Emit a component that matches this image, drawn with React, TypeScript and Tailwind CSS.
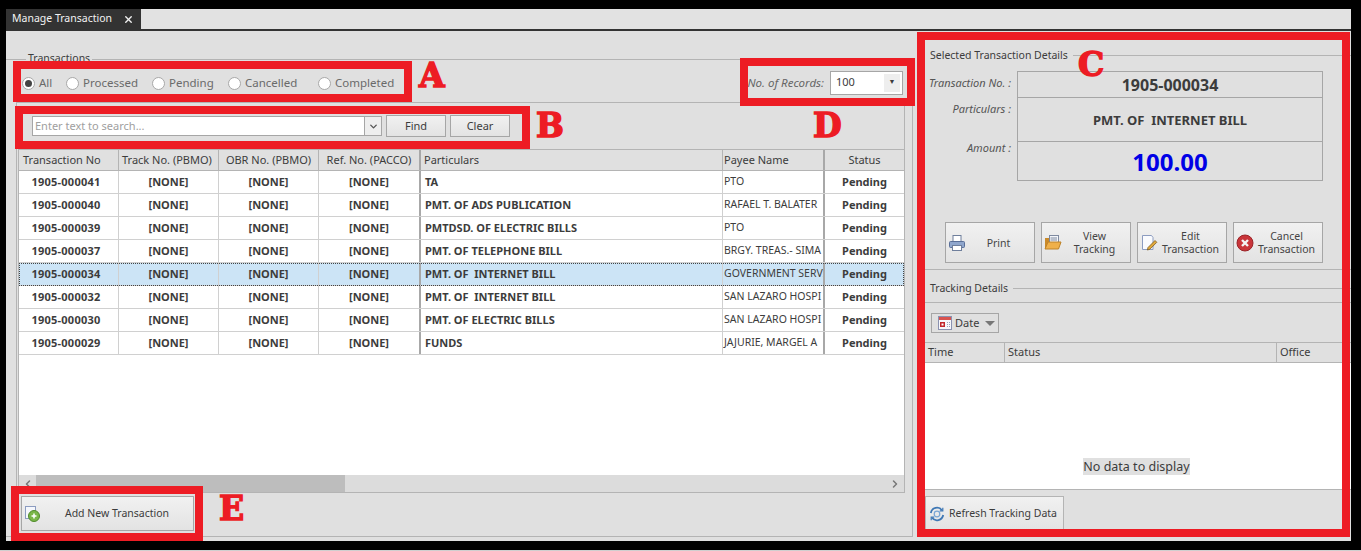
import type { ReactNode } from "react";
import { ChevronLeft, ChevronRight, ChevronDown, X } from "lucide-react";

// Manage Transaction window with the red callout boxes laid on top.
const FONT = "font-['Noto_Sans','Open_Sans',sans-serif]";

const rows = [
  { no: "1905-000041", part: "TA", payee: "PTO" },
  { no: "1905-000040", part: "PMT. OF ADS PUBLICATION", payee: "RAFAEL T. BALATER" },
  { no: "1905-000039", part: "PMTDSD. OF ELECTRIC BILLS", payee: "PTO" },
  { no: "1905-000037", part: "PMT. OF TELEPHONE BILL", payee: "BRGY. TREAS.- SIMA" },
  { no: "1905-000034", part: "PMT. OF  INTERNET BILL", payee: "GOVERNMENT SERVI", selected: true },
  { no: "1905-000032", part: "PMT. OF  INTERNET BILL", payee: "SAN LAZARO HOSPI" },
  { no: "1905-000030", part: "PMT. OF ELECTRIC BILLS", payee: "SAN LAZARO HOSPI" },
  { no: "1905-000029", part: "FUNDS", payee: "JAJURIE, MARGEL A" },
];

const radios = [
  { label: "All", w: "w-[44px]", on: true },
  { label: "Processed", w: "w-[86px]" },
  { label: "Pending", w: "w-[76px]" },
  { label: "Cancelled", w: "w-[90px]" },
  { label: "Completed", w: "w-[84px]" },
];

const Radio = ({ label, w, on }: { label: string; w: string; on?: boolean }) => (
  <div className={`${w} flex items-center gap-[4px] shrink-0`}>
    <span className="w-[13px] h-[13px] rounded-full border border-[#a8a8a8] bg-white flex items-center justify-center">
      {on && <span className="w-[7px] h-[7px] rounded-full bg-[#444]" />}
    </span>
    <span className="text-[11.5px] text-[#6a6a6a]">{label}</span>
  </div>
);

const Callout = ({ className }: { className: string }) => (
  <div className={`absolute border-[8px] border-[#ed1c24] pointer-events-none ${className}`} />
);

const Letter = ({ className, children }: { className: string; children: ReactNode }) => (
  <div className={`absolute font-['DejaVu_Serif',serif] font-bold text-[33px] leading-none text-[#ed1c24] [-webkit-text-stroke:1.5px_#ed1c24] ${className}`}>
    {children}
  </div>
);

const ActionButton = ({ icon, children }: { icon: ReactNode; children: ReactNode }) => (
  <div className="w-[90px] h-[41px] shrink-0 border border-[#a6a6a6] bg-gradient-to-b from-[#f1f1f1] to-[#e3e3e3] flex items-center pl-[2px] pr-[3px]">
    <span className="w-[18px] h-[18px] shrink-0">{icon}</span>
    <span className="flex-1 text-center text-[10.5px] leading-[13px] text-[#444] pt-[1px]">{children}</span>
  </div>
);

const PrinterIcon = () => (
  <svg viewBox="0 0 18 18" className="w-full h-full">
    <rect x="5" y="1.500" width="8" height="6" fill="#fff" stroke="#6f7f9c" />
    <rect x="1.500" y="7.500" width="15" height="6" rx="1" fill="#8fa6cc" stroke="#5a6f98" />
    <rect x="4.500" y="11.500" width="9" height="5" fill="#fff" stroke="#6f7f9c" />
  </svg>
);

const FolderIcon = () => (
  <svg viewBox="0 0 18 18" className="w-full h-full">
    <path d="M1 4h4l1-1v12H1z" fill="#c98a2b" />
    <rect x="5.500" y="1.500" width="9" height="9" fill="#f4f6fa" stroke="#7f8aa0" />
    <path d="M6.500 4h6.500M6.500 6h6.500" stroke="#7f8aa0" />
    <path d="M4 8h13l-2.500 7H1z" fill="#efb04a" stroke="#bd8228" />
  </svg>
);

const EditIcon = () => (
  <svg viewBox="0 0 18 18" className="w-full h-full">
    <path d="M2.500 1.500h9l1.500 2v12h-10.500z" fill="#fafbfe" stroke="#8c9cc0" />
    <path d="M8 13.500l7-7 1.800 1.800-7 7-2.500.7z" fill="#e2a93b" stroke="#7a5a20" strokeWidth="0.800" />
  </svg>
);

const CancelIcon = () => (
  <svg viewBox="0 0 18 18" className="w-full h-full">
    <circle cx="9" cy="9" r="8" fill="#c9353a" stroke="#9a2327" />
    <path d="M6 6l6 6M12 6l-6 6" stroke="#f4f4f4" strokeWidth="2.400" />
  </svg>
);

const CalendarIcon = () => (
  <svg viewBox="0 0 14 14" className="w-[14px] h-[14px] shrink-0">
    <rect x="0.500" y="0.500" width="13" height="13" fill="#f7f7fb" stroke="#8a92b0" />
    <rect x="1" y="1" width="12" height="3" fill="#d9534f" />
    <rect x="2" y="6" width="5" height="5" fill="#c1272d" />
    <rect x="3.500" y="7.500" width="2" height="2" fill="#fff" />
    <path d="M9 6.500h3M9 8.500h3M9 10.500h3" stroke="#9aa3bd" strokeDasharray="1 1" />
  </svg>
);

const AddIcon = () => (
  <svg viewBox="0 0 16 16" className="w-[16px] h-[16px] shrink-0">
    <rect x="0.500" y="0.500" width="10" height="12" fill="#f5f7fc" stroke="#8c9cc0" />
    <circle cx="9" cy="10" r="5.500" fill="#7ab648" stroke="#4f8a2a" />
    <path d="M6.500 10h5M9 7.500v5" stroke="#fff" strokeWidth="1.500" />
  </svg>
);

const RefreshIcon = () => (
  <svg viewBox="0 0 16 16" className="w-[16px] h-[16px] shrink-0" fill="none" stroke="#3f78b5" strokeWidth="1.800">
    <circle cx="8" cy="8" r="2.800" stroke="#7aa6d4" strokeWidth="1.200" />
    <path d="M1.800 7A6.300 6.300 0 0 1 13 4.200" />
    <path d="M14.200 9A6.300 6.300 0 0 1 3 11.800" />
    <path d="M13.800 1.800v3h-3M2.200 14.200v-3h3" strokeWidth="1.200" />
  </svg>
);

export default function App() {
  return (
    <div className={`${FONT} relative w-[1361px] h-[551px] overflow-hidden bg-black border-b border-[#cfcfcf] pt-[9px] pl-[6px] pr-[10px] text-[11px] text-[#3c3c3c]`}>
      {/* tab strip */}
      <div className="h-[22px] bg-[#e2e2e2] border-b-2 border-[#333] flex">
        <div className="w-[135px] bg-[#333] text-[#f2f2f2] flex items-center pl-[6px] text-[10.5px]">
          <span className="w-[111px] shrink-0">Manage Transaction</span>
          <X size={11} strokeWidth={3} className="shrink-0" />
        </div>
      </div>

      <div className="h-[510px] bg-[#e0e0e0] flex">
        {/* left side */}
        <div className="w-[907px] shrink-0 pt-[28px] pb-[4px] flex flex-col">
          <div className="flex-1 min-h-0 border-y border-r border-[#b4b4b4] flex flex-col relative">
            <span className="absolute -top-[9px] left-[20px] bg-[#e0e0e0] px-[2px] text-[10.5px] leading-[14px]">Transactions</span>
            <div className="h-[42px] shrink-0 flex items-center pl-[16px] pr-[9px] pt-[4px]">
              {radios.map((r) => (
                <Radio key={r.label} {...r} />
              ))}
              <div className="ml-auto flex items-center gap-[6px] -mt-[1px]">
                <span className="italic text-[11.5px] text-[#666]">No. of Records:</span>
                <div className="w-[73px] h-[24px] border border-[#a6a6a6] bg-white flex items-center pl-[5px] text-[11px] relative">
                  100
                  <span className="absolute right-[2px] inset-y-[2px] w-[16px] bg-[#eee] flex items-center justify-center text-[7px]">▼</span>
                </div>
              </div>
            </div>

            <div className="ml-[10px] w-[889px] flex-1 min-h-0 border border-[#b4b4b4] flex flex-col">
              <div className="h-[46px] shrink-0 flex items-center pl-[15px]">
                <div className="w-[350px] h-[20px] border border-[#a6a6a6] bg-white flex items-center pl-[2px] text-[#a0a0a0]">
                  <span className="flex-1">Enter text to search...</span>
                  <span className="w-[17px] h-full border-l border-[#a6a6a6] bg-[#eee] flex items-center justify-center">
                    <ChevronDown size={11} strokeWidth={3} className="text-[#555]" />
                  </span>
                </div>
                <div className="ml-[4px] w-[60px] h-[22px] border border-[#a6a6a6] bg-gradient-to-b from-[#f1f1f1] to-[#e3e3e3] flex items-center justify-center">Find</div>
                <div className="ml-[4px] w-[60px] h-[22px] border border-[#a6a6a6] bg-gradient-to-b from-[#f1f1f1] to-[#e3e3e3] flex items-center justify-center">Clear</div>
              </div>

              {/* grid */}
              <div className="ml-[1px] flex-1 min-h-0 bg-white border-t border-l border-[#b4b4b4] flex flex-col">
                <div className="h-[21px] shrink-0 bg-[#e0e0e0] flex border-b border-[#b4b4b4] [&>div]:flex [&>div]:items-center [&>div]:shrink-0">
                  <div className="w-[100px] pl-[4px] border-r border-[#b4b4b4]">Transaction No</div>
                  <div className="w-[100px] pl-[3px] border-r border-[#b4b4b4]">Track No. (PBMO)</div>
                  <div className="w-[100px] justify-center border-r border-[#b4b4b4]">OBR No. (PBMO)</div>
                  <div className="w-[102px] justify-center border-r-2 border-[#a8a8a8]">Ref. No. (PACCO)</div>
                  <div className="w-[302px] pl-[3px] border-r border-[#b4b4b4]">Particulars</div>
                  <div className="w-[102px] pl-[1px] border-r-2 border-[#a8a8a8]">Payee Name</div>
                  <div className="w-[79px] justify-center">Status</div>
                </div>
                {rows.map((r) => (
                  <div
                    key={r.no}
                    className={`h-[23px] shrink-0 flex font-bold border-b border-[#d0d0d0] [&>div]:flex [&>div]:items-center [&>div]:shrink-0 ${
                      r.selected ? "bg-[#cce4f6] outline-1 outline-dotted outline-offset-[-1px] outline-[#444]" : ""
                    }`}
                  >
                    <div className="w-[100px] justify-center pr-[5px] tracking-[0.25px] border-r border-[#d0d0d0]">{r.no}</div>
                    <div className="w-[100px] justify-center border-r border-[#d0d0d0]">[NONE]</div>
                    <div className="w-[100px] justify-center border-r border-[#d0d0d0]">[NONE]</div>
                    <div className="w-[102px] justify-center border-r-2 border-[#a8a8a8]">[NONE]</div>
                    <div className="w-[302px] pl-[4px] whitespace-pre border-r border-[#d0d0d0]">{r.part}</div>
                    <div className="w-[102px] pl-[1px] text-[10.5px] font-normal overflow-hidden whitespace-nowrap border-r-2 border-[#a8a8a8]">{r.payee}</div>
                    <div className="w-[79px] justify-center">Pending</div>
                  </div>
                ))}
                <div className="flex-1" />
                <div className="h-[17px] shrink-0 bg-[#dcdcdc] flex items-center justify-between px-[3px] relative">
                  <ChevronLeft size={12} strokeWidth={3} className="text-[#777]" />
                  <div className="absolute left-[17px] top-0 w-[309px] h-full bg-[#bdbdbd]" />
                  <ChevronRight size={12} strokeWidth={3} className="text-[#777]" />
                </div>
              </div>
            </div>

            <div className="h-[43px] shrink-0 pl-[15px] pt-[3px]">
              <div className="w-[173px] h-[35px] border border-[#a6a6a6] bg-gradient-to-b from-[#f1f1f1] to-[#e3e3e3] flex items-center pl-[3px]">
                <AddIcon />
                <span className="flex-1 text-center text-[10.5px] pt-[1px]">Add New Transaction</span>
              </div>
            </div>
          </div>
        </div>

        {/* right side */}
        <div className="flex-1 min-w-0 pl-[12px] flex flex-col text-[10.5px]">
          <div className="h-[32px] shrink-0 flex items-end pb-[1px] pl-[5px]">
            <span className="leading-[14px]">Selected Transaction Details</span>
            <span className="flex-1 border-t border-[#b4b4b4] ml-[5px] mb-[6px]" />
          </div>
          <div className="h-[159px] shrink-0 flex pt-[8px]">
            <div className="w-[92px] shrink-0 flex flex-col items-end pr-[6px] pt-[4px] italic text-[#555] text-[11px]">
              <span className="h-[26px]">Transaction No. :</span>
              <span className="h-[39px]">Particulars :</span>
              <span>Amount :</span>
            </div>
            <div className="w-[306px] h-[110px] border border-[#a6a6a6] flex flex-col font-bold text-center">
              <div className="h-[26px] border-b border-[#a6a6a6] flex items-center justify-center text-[16px] pt-[1px]">1905-000034</div>
              <div className="h-[46px] border-b border-[#a6a6a6] flex items-center justify-center text-[13px] pt-[3px] whitespace-pre">PMT. OF  INTERNET BILL</div>
              <div className="flex-1 flex items-center justify-center text-[24px] pt-[2px] text-[#0000e6]">100.00</div>
            </div>
          </div>
          <div className="flex gap-[6px] pl-[20px] h-[48px] shrink-0 border-b border-[#b4b4b4]">
            <ActionButton icon={<PrinterIcon />}>Print</ActionButton>
            <ActionButton icon={<FolderIcon />}>View<br />Tracking</ActionButton>
            <ActionButton icon={<EditIcon />}>Edit<br />Transaction</ActionButton>
            <ActionButton icon={<CancelIcon />}>Cancel<br />Transaction</ActionButton>
          </div>
          <div className="h-[33px] shrink-0 border-b border-[#b4b4b4] flex items-center pl-[5px] pt-[5px]">
            <span>Tracking Details</span>
            <span className="flex-1 border-t border-[#b4b4b4] ml-[5px]" />
          </div>
          <div className="h-[39px] shrink-0 pl-[6px] pt-[10px]">
            <div className="w-[68px] h-[20px] border border-[#a6a6a6] flex items-center pl-[6px] gap-[3px]">
              <CalendarIcon />
              <span className="text-[11px]">Date</span>
              <span className="ml-[3px] border-x-[5px] border-x-transparent border-t-[5px] border-t-[#777]" />
            </div>
          </div>
          <div className="h-[21px] shrink-0 border-y border-[#b4b4b4] flex text-[11px] [&>div]:flex [&>div]:items-center">
            <div className="w-[80px] pl-[3px] border-r border-[#b4b4b4]">Time</div>
            <div className="w-[272px] pl-[3px] border-r border-[#b4b4b4]">Status</div>
            <div className="flex-1 pl-[3px]">Office</div>
          </div>
          <div className="h-[127px] shrink-0 bg-white border-b border-[#b4b4b4] flex items-end justify-center pb-[14px] pr-[3px]">
            <span className="bg-[#e0e0e0] text-[12.5px] leading-[17px]">No data to display</span>
          </div>
          <div className="flex-1 flex items-start">
            <div className="w-[139px] h-[35px] mt-[6px] border border-[#b4b4b4] bg-gradient-to-b from-[#f1f1f1] to-[#e3e3e3] flex items-center pl-[3px] gap-[4px]">
              <RefreshIcon />
              <span className="text-[10.5px] pt-[1px]">Refresh Tracking Data</span>
            </div>
          </div>
        </div>
      </div>

      {/* red callouts */}
      <Callout className="left-[13px] top-[61px] w-[399px] h-[41px]" />
      <Callout className="left-[15px] top-[106px] w-[515px] h-[43px]" />
      <Callout className="left-[917px] top-[32px] w-[433px] h-[505px]" />
      <Callout className="left-[740px] top-[58px] w-[175px] h-[48px]" />
      <Callout className="left-[11px] top-[486px] w-[192px] h-[55px]" />
      <Letter className="left-[419px] top-[59px]">A</Letter>
      <Letter className="left-[536px] top-[109px]">B</Letter>
      <Letter className="left-[1078px] top-[48px]">C</Letter>
      <Letter className="left-[813px] top-[109px]">D</Letter>
      <Letter className="left-[219px] top-[492px]">E</Letter>
    </div>
  );
}
